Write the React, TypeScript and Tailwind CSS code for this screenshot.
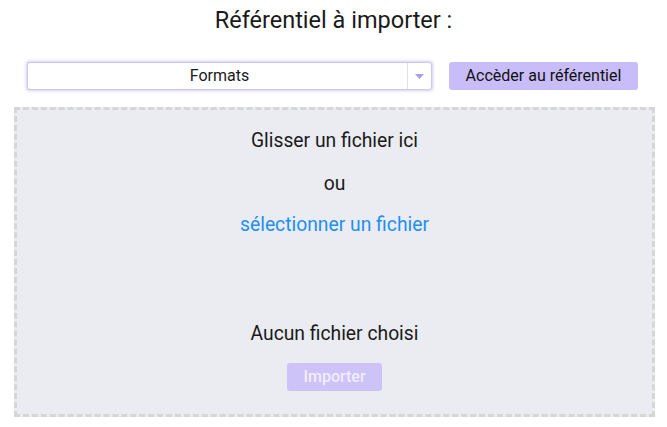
import React from 'react';

export default function App() {
    return (
        <div className="w-[667px] h-[427px] bg-white font-['Roboto',sans-serif] text-[#1a1a1a] overflow-hidden">
            <h1 className="h-[42px] pt-[6px] text-center text-[23.5px] leading-[28px]">Référentiel à importer :</h1>
            <div className="flex items-center mt-[20px] pl-[27px] pr-[29px] gap-[17px]">
                <div className="flex-1 h-[28px] flex bg-white border border-[#cfc8ec] rounded-[3px] shadow-[0_0_3px_1px_rgba(160,140,240,0.45)]">
                    <div className="flex-1 flex items-center justify-center text-[16px] pl-[4px]">Formats</div>
                    <div className="w-[24px] flex items-center justify-center border-l border-[#e2e2e2]">
                        <svg width="9" height="5" viewBox="0 0 9 5">
                            <path d="M0 0h9L4.5 5z" fill="#a99cf0" />
                        </svg>
                    </div>
                </div>
                <button className="w-[189px] h-[28px] rounded-[3px] bg-[#c8bdf9] text-[16px] text-[#111]">Accèder au référentiel</button>
            </div>
            <div className="mt-[17px] ml-[14px] w-[641px] h-[310px] border-[3px] border-dashed border-[#d6d6d6] bg-[#eaecf1] flex flex-col items-center text-[19.3px]">
                <p className="mt-[19px] leading-[24px]">Glisser un fichier ici</p>
                <p className="mt-[19px] leading-[24px]">ou</p>
                <p className="mt-[17px] leading-[24px] text-[#1e8ff5]">sélectionner un fichier</p>
                <p className="mt-[85px] leading-[24px]">Aucun fichier choisi</p>
                <button className="mt-[17px] w-[95px] h-[28px] rounded-[3px] bg-[#cdc3f8] text-[16px] font-medium text-[#f1eefe]">Importer</button>
            </div>
        </div>
    );
}
